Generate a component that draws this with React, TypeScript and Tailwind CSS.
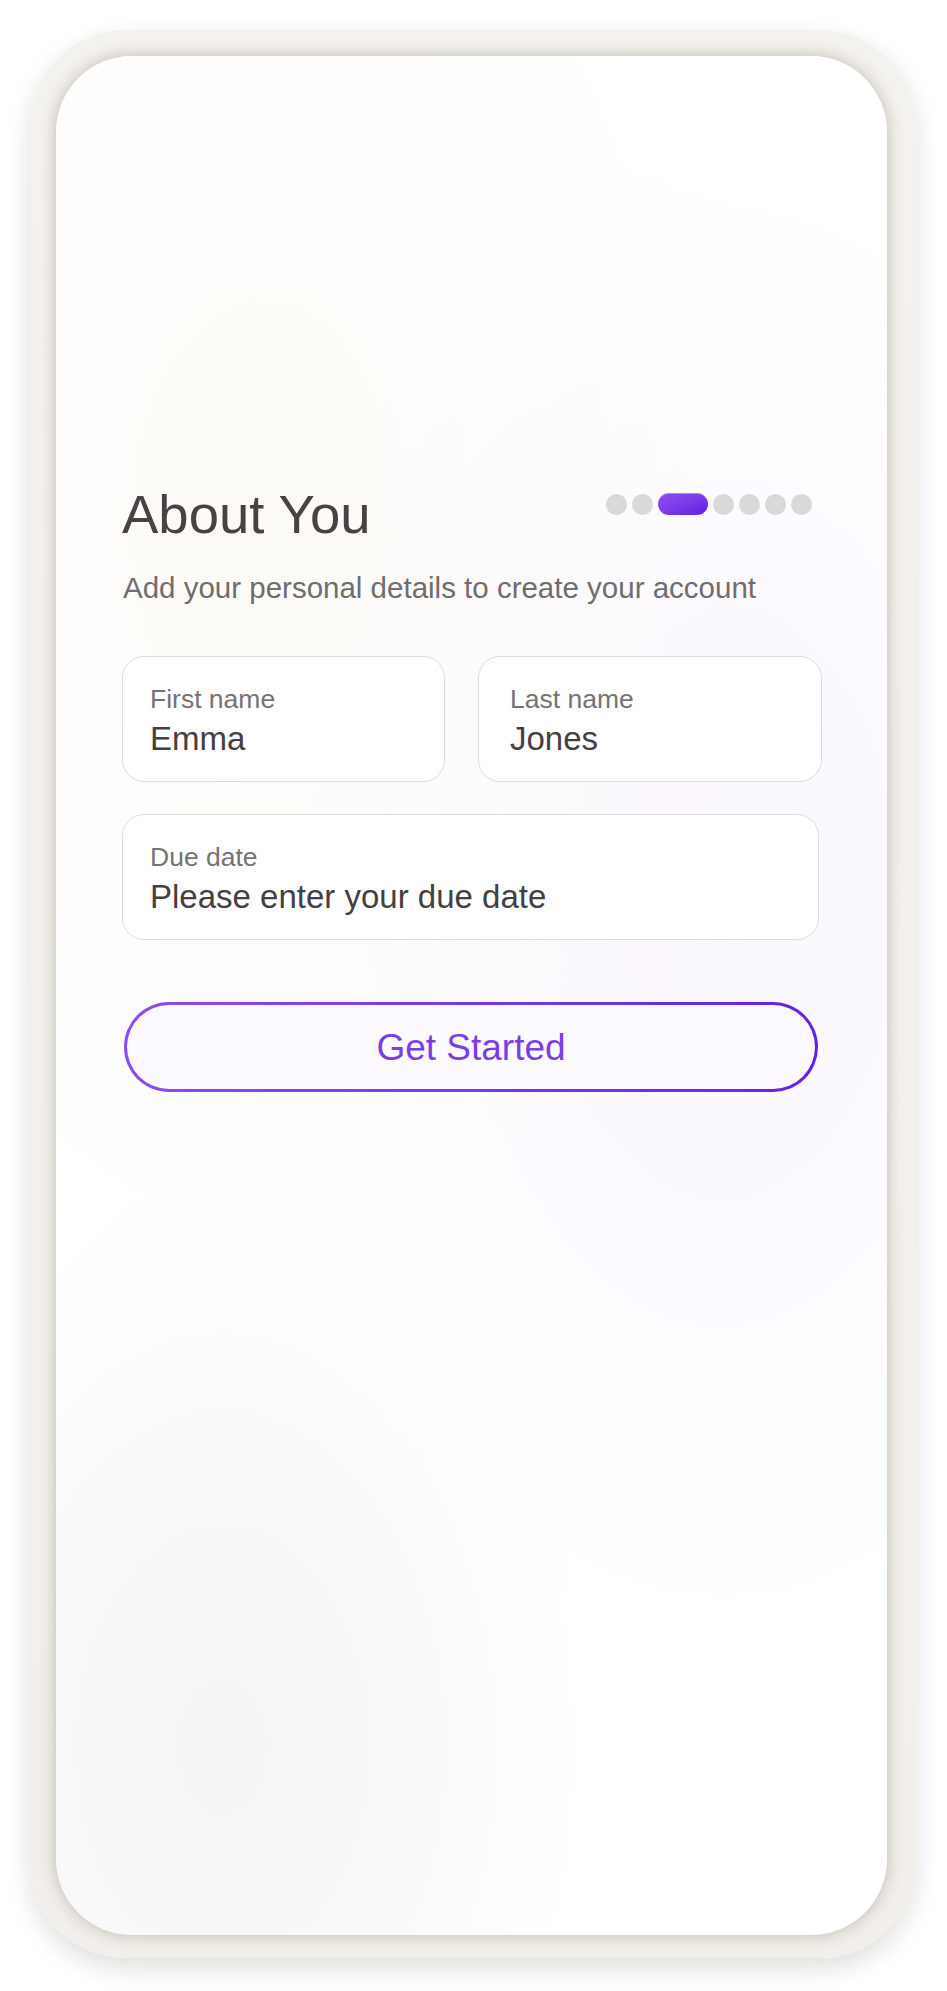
import React from 'react';

const DOTS = [0, 1, 2, 3, 4, 5, 6];
const ACTIVE_STEP = 2;

const Field = ({ label, value, className = '' }: { label: string; value: string; className?: string }) => (
  <div className={`h-[126px] rounded-[22px] border border-[#dedcdc] bg-white pt-[27px] ${className}`}>
    <div className="text-[26.5px] leading-[30px] text-[#767373]">{label}</div>
    <div className="mt-[6px] text-[33px] leading-[37px] text-[#453e42]">{value}</div>
  </div>
);

export default function App() {
  return (
    <div className="min-h-screen bg-white pl-[30px] pt-[30px] font-['Liberation_Sans',Arial,sans-serif]">
      {/* Phone bezel */}
      <div className="h-[1928px] w-[886px] rounded-[96px] bg-gradient-to-b from-[#f4f2ee] to-[#f2efea] pb-[23px] pl-[26px] pr-[29px] pt-[26px] shadow-[0_10px_26px_rgba(0,0,0,0.13)]">
        {/* Screen */}
        <div className="h-[1879px] w-full overflow-hidden rounded-[76px] bg-[radial-gradient(ellipse_60%_45%_at_25%_25%,#fcfbf7_0%,transparent_100%),radial-gradient(ellipse_55%_40%_at_80%_45%,#faf6fe_0%,transparent_100%),radial-gradient(ellipse_45%_30%_at_20%_90%,#f4f4f4_0%,transparent_100%),linear-gradient(#ffffff,#ffffff)] pl-[66px] pt-[428px] shadow-[0_0_16px_rgba(70,55,45,0.3)]">
          <div className="flex w-[700px] items-start justify-between">
            <h1 className="text-[54.5px] font-normal leading-[62px] text-[#4a4145]">About You</h1>
            <div className="mr-[10px] mt-[9px] flex items-center gap-[5px]">
              {DOTS.map((i) =>
                i === ACTIVE_STEP ? (
                  <div
                    key={i}
                    className="h-[22px] w-[50px] rounded-full bg-gradient-to-br from-[#8e4fec] via-[#7c3ae8] to-[#5f16e6] shadow-[inset_0_1px_0_rgba(255,255,255,0.35)]"
                  />
                ) : (
                  <div key={i} className="h-[21px] w-[21px] rounded-full bg-[#d9d9d9]" />
                )
              )}
            </div>
          </div>

          <p className="mt-[25px] pl-[1px] text-[29.5px] leading-[34px] text-[#706d6e]">
            Add your personal details to create your account
          </p>

          <div className="mt-[51px] flex w-[700px] gap-[33px]">
            <Field label="First name" value="Emma" className="w-[323px] pl-[27px]" />
            <Field label="Last name" value="Jones" className="flex-1 pl-[31px]" />
          </div>

          <Field label="Due date" value="Please enter your due date" className="mt-[32px] w-[697px] pl-[27px]" />

          <div className="ml-[2px] mt-[62px] w-[694px] rounded-full bg-gradient-to-r from-[#8a4ced] to-[#6420ea] p-[3px]">
            <button className="flex h-[84px] w-full items-center justify-center rounded-full bg-[#fcfafe] text-[37px] leading-none text-[#7a3de8]">
              Get Started
            </button>
          </div>
        </div>
      </div>
    </div>
  );
}
